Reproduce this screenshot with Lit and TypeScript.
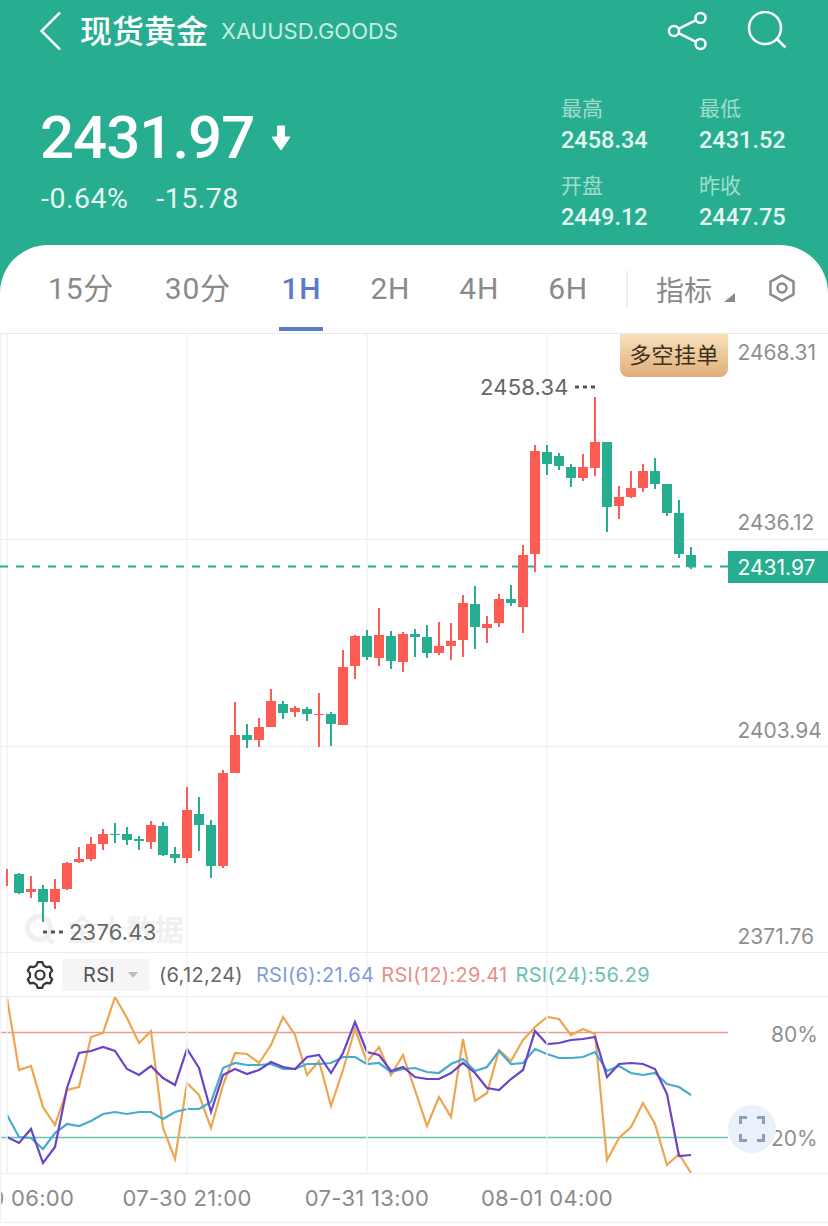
import { LitElement, html, svg, css } from 'lit';
import { customElement } from 'lit/decorators.js';

// [top of body, bottom of body, wick top, wick bottom, up?] first candle sits at x=7, then every 12px
const CANDLES: [number, number, number, number, number][] = [
  [0, 0, 869, 886, 1], [874, 893, 873, 894, 0], [889, 892, 876, 898, 1], [889, 902, 885, 922, 0],
  [889, 902, 879, 909, 1], [863, 889, 862, 890, 1], [859, 862, 847, 863, 1], [844, 859, 837, 861, 1],
  [834, 844, 829, 850, 1], [834, 835, 823, 843, 0], [834, 840, 827, 845, 0], [839, 841, 836, 850, 0],
  [825, 842, 821, 849, 1], [826, 855, 822, 856, 0], [854, 858, 847, 863, 0], [810, 858, 787, 863, 1],
  [814, 825, 797, 851, 0], [825, 866, 820, 878, 0], [773, 866, 770, 868, 1], [735, 773, 702, 773, 1],
  [735, 740, 724, 748, 0], [727, 740, 718, 747, 1], [701, 727, 689, 727, 1], [704, 713, 701, 719, 0],
  [708, 712, 706, 717, 1], [709, 714, 707, 721, 0], [714, 715, 693, 747, 1], [714, 724, 712, 746, 0],
  [667, 725, 650, 725, 1], [636, 666, 635, 679, 1], [636, 657, 630, 660, 0], [635, 658, 608, 666, 1],
  [636, 661, 631, 669, 0], [634, 662, 632, 672, 1], [634, 637, 629, 657, 0], [637, 653, 625, 658, 0],
  [646, 653, 622, 655, 1], [641, 646, 623, 660, 1], [603, 640, 595, 657, 1], [604, 627, 586, 649, 0],
  [624, 628, 616, 643, 1], [599, 623, 594, 627, 1], [599, 603, 585, 606, 0], [555, 607, 545, 633, 1],
  [451, 554, 445, 572, 1], [452, 464, 445, 475, 0], [456, 466, 453, 470, 0], [467, 478, 464, 487, 0],
  [467, 478, 454, 481, 1], [442, 468, 397, 476, 1], [442, 507, 442, 532, 0], [497, 506, 486, 519, 1],
  [488, 497, 471, 498, 1], [471, 488, 464, 492, 1], [471, 484, 458, 489, 0], [484, 513, 484, 516, 0],
  [513, 554, 500, 558, 0], [555, 567, 547, 569, 0],
];

const RSI_ORANGE = [998, 1070, 1066, 1107, 1125, 1090, 1087, 1037, 1033, 997, 1018, 1043, 1031, 1128, 1159, 1083, 1095, 1128, 1085, 1053, 1054, 1063, 1045, 1017, 1035, 1075, 1061, 1106, 1070, 1029, 1062, 1047, 1075, 1055, 1090, 1126, 1097, 1117, 1039, 1101, 1093, 1050, 1061, 1040, 1027, 1017, 1019, 1035, 1029, 1034, 1160, 1138, 1127, 1103, 1124, 1165, 1154, 1173];
const RSI_PURPLE = [1137, 1143, 1129, 1163, 1147, 1088, 1053, 1051, 1047, 1051, 1069, 1075, 1066, 1078, 1085, 1049, 1068, 1112, 1075, 1069, 1074, 1070, 1062, 1067, 1069, 1057, 1055, 1073, 1053, 1022, 1052, 1055, 1071, 1067, 1077, 1079, 1079, 1073, 1063, 1073, 1088, 1090, 1079, 1070, 1031, 1044, 1043, 1040, 1039, 1037, 1077, 1064, 1063, 1064, 1069, 1094, 1156, 1155];
const RSI_BLUE = [1115, 1137, 1138, 1149, 1133, 1124, 1126, 1121, 1114, 1112, 1114, 1112, 1112, 1119, 1112, 1109, 1109, 1102, 1068, 1063, 1065, 1065, 1064, 1069, 1069, 1064, 1064, 1063, 1057, 1057, 1064, 1063, 1072, 1069, 1068, 1072, 1073, 1064, 1059, 1071, 1067, 1051, 1064, 1063, 1049, 1054, 1058, 1058, 1057, 1052, 1071, 1066, 1073, 1075, 1073, 1084, 1087, 1095];

const pts = (ys: number[]) => ys.map((y, i) => `${7 + i * 12},${y}`).join(' ');

// six rounded teeth, one pointing straight up
const gearPoints = () => {
  const out: string[] = [];
  for (let i = 0; i < 6; i++) {
    const a = -90 + i * 60;
    [[-20, 10.2], [-10, 13], [10, 13], [20, 10.2]].forEach(([d, r]) => {
      const t = ((a + d) * Math.PI) / 180;
      out.push(`${(14 + r * Math.cos(t)).toFixed(1)},${(15 + r * Math.sin(t)).toFixed(1)}`);
    });
  }
  return out.join(' ');
};

@customElement('app-root')
export class AppRoot extends LitElement {
  static styles = css`
    :host {
      display: block;
      width: 828px;
      height: 1226px;
      overflow: hidden;
      background: #fff;
      font-family: Inter, 'Noto Sans CJK SC', sans-serif;
    }

    .header {
      height: 293px;
      box-sizing: border-box;
      background: #27ae90;
      color: #fff;
      padding: 12px 42px 0 40px;
      font-family: Roboto, 'Noto Sans CJK SC', sans-serif;
    }

    .topbar {
      display: flex;
      align-items: center;
      height: 38px;
    }

    .title {
      margin: -4px 0 0 19px;
      font-size: 32px;
      font-weight: 500;
    }

    .code {
      margin-left: 13px;
      font-family: Inter, sans-serif;
      font-size: 22px;
      color: #c9ece1;
    }

    .topbar .share { margin-left: auto; }
    .topbar .search { margin-left: 39px; }

    .quote {
      display: flex;
      justify-content: space-between;
      margin-top: 46px;
    }

    .price-row {
      display: flex;
      align-items: center;
      gap: 17px;
      margin-top: 9px;
    }

    .price {
      font-size: 60px;
      line-height: 66px;
      font-weight: 500;
      letter-spacing: -1px;
    }

    .change {
      display: flex;
      gap: 28px;
      margin: 12px 0 0 1px;
      font-size: 28.5px;
      line-height: 32px;
      letter-spacing: 0.5px;
      color: #e8f7f2;
    }

    .stats {
      display: grid;
      grid-template-columns: 138px 87px;
      row-gap: 19px;
    }

    .stat-label {
      font-size: 21px;
      line-height: 26px;
      color: #a3dccb;
    }

    .stat-value {
      margin-top: 4px;
      font-size: 23.5px;
      line-height: 28px;
      font-weight: 500;
      color: #e6f6f1;
    }

    .tabs {
      display: flex;
      align-items: center;
      height: 88px;
      margin-top: -48px;
      padding-left: 48px;
      border-radius: 48px 48px 0 0;
      background: #fff;
      color: #8a8a8a;
      font-family: Roboto, 'Noto Sans CJK SC', sans-serif;
      font-size: 30px;
      box-sizing: border-box;
      position: relative;
    }

    .tab {
      position: relative;
      margin-right: 49px;
      line-height: 88px;
      letter-spacing: 0.8px;
      white-space: nowrap;
    }

    .tab.minutes { margin-right: 50.6px; }

    .tab.active {
      color: #5a7bcb;
      font-weight: 500;
    }

    .tab.active::after {
      content: '';
      position: absolute;
      left: 50%;
      width: 44px;
      margin-left: -22px;
      bottom: 2px;
      height: 4px;
      background: #5a7bcb;
    }

    .divider {
      width: 2px;
      height: 36px;
      margin: 0 28px 0 -11px;
      background: #ececec;
    }

    .indicator { font-size: 28px; }

    .tabs .caret { margin: 16px 0 0 12px; }
    .tabs .hex { margin: -2px 0 0 34px; }

    .chart {
      position: relative;
      height: 893px;
      border-top: 1px solid #e9e9e9;
      box-sizing: border-box;
    }

    .grid {
      position: absolute;
      left: 0;
      top: 0;
    }

    svg { display: block; }

    .canvas { position: relative; }

    .axis {
      font-size: 21px;
      fill: #8f8f8f;
    }

    .mark {
      font-size: 22px;
      fill: #666;
      letter-spacing: 0.2px;
    }

    .tag {
      font-size: 21px;
      fill: #fff;
    }

    .wm {
      font-size: 29px;
      font-weight: 700;
      fill: #eff0f0;
    }

    .time {
      font-size: 22px;
      fill: #8a8a8a;
      letter-spacing: 0.3px;
    }

    .order {
      position: absolute;
      left: 620px;
      top: 0;
      width: 108px;
      height: 43px;
      border-radius: 0 0 8px 8px;
      background: linear-gradient(#f9e0bd, #dfae78);
      color: #3b2f1d;
      font-size: 22px;
      line-height: 43px;
      text-align: center;
      letter-spacing: 0.4px;
    }

    .rsi-bar {
      position: relative;
      display: flex;
      align-items: center;
      height: 44px;
      padding: 2px 0 0 26px;
      box-sizing: border-box;
      font-size: 20px;
      letter-spacing: 0.3px;
      color: #666;
      white-space: nowrap;
    }

    .select {
      display: flex;
      align-items: center;
      width: 87px;
      height: 32px;
      margin: 0 10px 0 8px;
      padding-left: 21px;
      box-sizing: border-box;
      background: #f5f5f5;
      font-size: 20px;
      color: #555;
    }

    .select .caret { margin-left: 13px; }

    .params { margin-right: 13px; }
    .rsi6 { color: #7f9cd9; margin-right: 7px; }
    .rsi12 { color: #e68f88; margin-right: 8px; }
    .rsi24 { color: #6cc0b1; }

    .expand {
      position: absolute;
      left: 728px;
      top: 771px;
      width: 48px;
      height: 48px;
      border-radius: 50%;
      background: #e9f2fb;
      display: flex;
      align-items: center;
      justify-content: center;
    }
  `;

  private renderCandles() {
    return CANDLES.map(([top, bottom, wickTop, wickBottom, up], i) => {
      const x = 7 + i * 12;
      const color = up ? '#fd5c55' : '#27ae90';
      return svg`
        <rect x=${x - 1} y=${wickTop} width="2" height=${wickBottom - wickTop} fill=${color}></rect>
        ${top ? svg`<rect x=${x - 5} y=${top} width="10" height=${bottom - top} fill=${color}></rect>` : ''}
      `;
    });
  }

  render() {
    return html`
      <div class="header">
        <div class="topbar">
          <svg width="21" height="38" viewBox="0 0 21 38" fill="none" stroke="#fff" stroke-width="2.500">
            <path d="M20 .5 1.500 19 20 37.500" />
          </svg>
          <span class="title">现货黄金</span>
          <span class="code">XAUUSD.GOODS</span>
          <svg class="share" width="40" height="40" viewBox="0 0 40 40" fill="none" stroke="#fff" stroke-width="2.500">
            <circle cx="7" cy="20" r="5" />
            <circle cx="33.500" cy="7" r="5" />
            <circle cx="33.500" cy="33" r="5" />
            <path d="m11.500 17.800 17.500-8.600M11.500 22.200 29 30.800" />
          </svg>
          <svg class="search" width="40" height="40" viewBox="0 0 40 40" fill="none" stroke="#fff" stroke-width="2.500">
            <circle cx="19" cy="17" r="16" />
            <path d="m31 28 8.500 8.500" />
          </svg>
        </div>
        <div class="quote">
          <div>
            <div class="price-row">
              <span class="price">2431.97</span>
              <svg width="20" height="26" viewBox="0 0 20 26" fill="#fff" stroke="#fff" stroke-width="1" stroke-linejoin="round">
                <path d="M6.500 1h7v11h5.500L10 25 1 12h5.500z" />
              </svg>
            </div>
            <div class="change"><span>-0.64%</span><span>-15.78</span></div>
          </div>
          <div class="stats">
            <div><div class="stat-label">最高</div><div class="stat-value">2458.34</div></div>
            <div><div class="stat-label">最低</div><div class="stat-value">2431.52</div></div>
            <div><div class="stat-label">开盘</div><div class="stat-value">2449.12</div></div>
            <div><div class="stat-label">昨收</div><div class="stat-value">2447.75</div></div>
          </div>
        </div>
      </div>

      <div class="tabs">
        <span class="tab minutes">15分</span>
        <span class="tab minutes">30分</span>
        <span class="tab active">1H</span>
        <span class="tab">2H</span>
        <span class="tab">4H</span>
        <span class="tab">6H</span>
        <span class="divider"></span>
        <span class="indicator">指标</span>
        <svg class="caret" width="11" height="9" viewBox="0 0 11 9" fill="#8a8a8a"><path d="M11 0v9H0z" /></svg>
        <svg class="hex" width="26" height="28" viewBox="0 0 26 28" fill="none" stroke="#8a8a8a" stroke-width="2.500" stroke-linejoin="round">
          <path d="m13 1.300 11.500 6.400v12.600L13 26.700 1.500 20.300V7.700z" />
          <circle cx="13" cy="14" r="4.500" />
        </svg>
      </div>

      <div class="chart">
        <svg class="grid" width="828" height="892" viewBox="0 334 828 892">
          ${[0.5, 7, 187, 367, 547].map(
            (x) => svg`<line x1=${x} y1="334" x2=${x} y2=${x < 1 ? 1222 : 1173} stroke="#eff2f4" stroke-width="1.500"></line>`
          )}
          ${[539.5, 746.5, 952.5, 996.5, 1173.5, 1222.5].map(
            (y) => svg`<line x1="0" y1=${y} x2="828" y2=${y} stroke="#ececec" stroke-width="1"></line>`
          )}
        </svg>

        <div class="canvas">
          <svg width="828" height="618" viewBox="0 334 828 618">
            <g>
              <circle cx="39" cy="928" r="11.500" fill="none" stroke="#eff0f0" stroke-width="5"></circle>
              <path d="m46 936 7 7" stroke="#eff0f0" stroke-width="5"></path>
              <text class="wm" x="68" y="941">金十数据</text>
            </g>
            <line x1="0" y1="566.500" x2="728" y2="566.500" stroke="#27ae90" stroke-width="2" stroke-dasharray="8 8"></line>
            ${this.renderCandles()}
            <text class="axis" x="737.500" y="360">2468.31</text>
            <text class="axis" x="737.500" y="530">2436.12</text>
            <text class="axis" x="737.500" y="738">2403.94</text>
            <text class="axis" x="737.500" y="944">2371.76</text>
            <rect x="728" y="551" width="100" height="32" fill="#27ae90"></rect>
            <text class="tag" x="737.500" y="575">2431.97</text>
            <text class="mark" x="480" y="395">2458.34</text>
            <line x1="575" y1="387" x2="596" y2="387" stroke="#555" stroke-width="3" stroke-dasharray="4 4"></line>
            <line x1="43" y1="932" x2="64" y2="932" stroke="#555" stroke-width="3" stroke-dasharray="4 4"></line>
            <text class="mark" x="69" y="940">2376.43</text>
          </svg>
          <div class="order">多空挂单</div>
        </div>

        <div class="rsi-bar">
          <svg width="28" height="30" viewBox="0 0 28 30" fill="none" stroke="#333" stroke-width="2.200" stroke-linejoin="round">
            <polygon points=${gearPoints()}></polygon>
            <circle cx="14" cy="15" r="4.500" />
          </svg>
          <div class="select">
            RSI
            <svg class="caret" width="10" height="6" viewBox="0 0 10 6" fill="#bbb"><path d="M0 0h10L5 6z" /></svg>
          </div>
          <span class="params">(6,12,24)</span>
          <span class="rsi6">RSI(6):21.64</span>
          <span class="rsi12">RSI(12):29.41</span>
          <span class="rsi24">RSI(24):56.29</span>
        </div>

        <svg width="828" height="230" viewBox="0 996 828 230">
          <line x1="0" y1="1032.500" x2="728" y2="1032.500" stroke="#ea9a92" stroke-width="1.500"></line>
          <line x1="0" y1="1137.500" x2="728" y2="1137.500" stroke="#6dc1b3" stroke-width="1.500"></line>
          <polyline points=${pts(RSI_ORANGE)} fill="none" stroke="#eda64f" stroke-width="2.200"></polyline>
          <polyline points=${pts(RSI_BLUE)} fill="none" stroke="#47abce" stroke-width="2.200"></polyline>
          <polyline points=${pts(RSI_PURPLE)} fill="none" stroke="#6a43c7" stroke-width="2.200"></polyline>
          <text class="axis" x="771" y="1042">80%</text>
          <text class="axis" x="771" y="1146">20%</text>
          <text class="time" x="7" y="1206" text-anchor="middle">07-30 06:00</text>
          <text class="time" x="187" y="1206" text-anchor="middle">07-30 21:00</text>
          <text class="time" x="367" y="1206" text-anchor="middle">07-31 13:00</text>
          <text class="time" x="547" y="1206" text-anchor="middle">08-01 04:00</text>
        </svg>

        <div class="expand">
          <svg width="26" height="26" viewBox="0 0 26 26" fill="none" stroke="#8e9dbb" stroke-width="3">
            <path d="M1.500 8V1.500H8M18 1.500h6.500V8M24.500 18v6.500H18M8 24.500H1.500V18" />
          </svg>
        </div>
      </div>
    `;
  }
}
